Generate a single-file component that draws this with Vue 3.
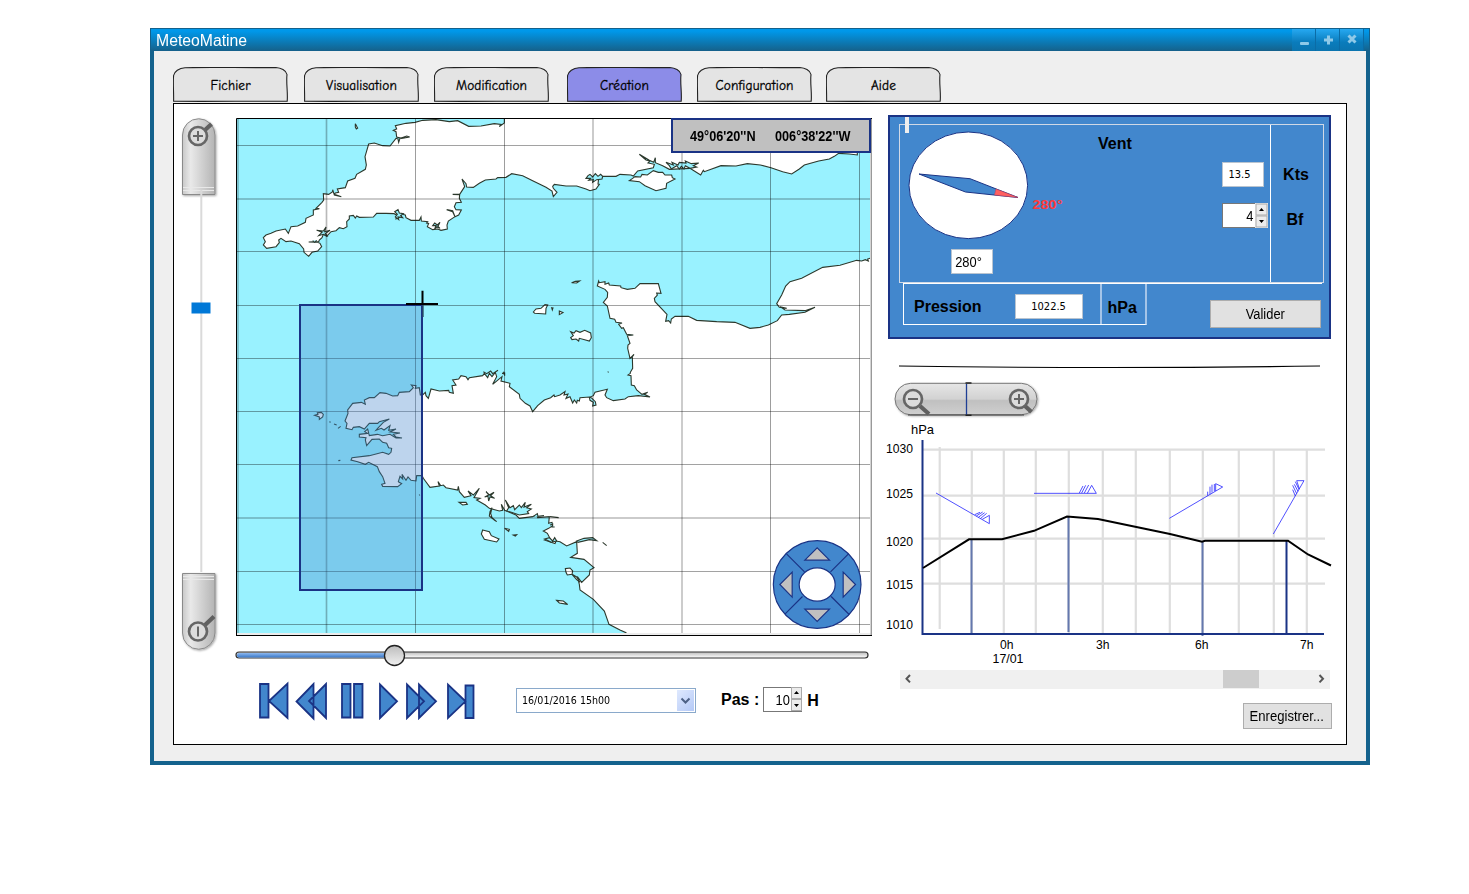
<script setup>
const tabs = ['Fichier', 'Visualisation', 'Modification', 'Création', 'Configuration', 'Aide']

// Map drawing units: three per screen pixel
const meridians = [
  { x: 6, w: 6, o: 0.2 }, { x: 271.5, w: 5, o: 0.27 }, { x: 538.5, w: 3, o: 0.38 }, { x: 805.5, w: 3, o: 0.38 },
  { x: 1071, w: 6, o: 0.2 }, { x: 1338, w: 5, o: 0.24 }, { x: 1603.5, w: 3, o: 0.38 }, { x: 1870.5, w: 3, o: 0.38 },
]
const parallels = [
  { y: 91.5, w: 3, o: 0.36 }, { y: 252, w: 6, o: 0.2 }, { y: 409.5, w: 3, o: 0.36 }, { y: 571.5, w: 3, o: 0.36 },
  { y: 730.5, w: 3, o: 0.36 }, { y: 889.5, w: 3, o: 0.36 }, { y: 1048.5, w: 3, o: 0.36 }, { y: 1209, w: 6, o: 0.2 },
  { y: 1369.5, w: 3, o: 0.36 }, { y: 1528.5, w: 3, o: 0.36 },
]

const england =
  'M805 9L1864 9 1864 120 1840 117 1808 115 1795 124 1780 132 1748 138 1705 150 1690 162 1667 177 1640 170 1605 158 1573 150 1534 146 1500 153 1455 152 1405 170 1402 166 1394 180 1375 168 1362 160 1300 163 1280 152 1258 143 1258 128 1253 142 1240 136 1210 118 1230 135 1242 138 1236 144 1255 148 1252 158 1205 168 1192 183 1185 180 1152 178 1140 184 1100 184 1088 190 1086 207 1090 208 1080 222 1062 227 1050 222 1022 213 990 213 955 208 950 214 952 220 963 232 952 245 948 228 930 217 890 197 860 182 827 176 810 187 785 188 780 192 748 195 730 205 712 217 692 216 690 206 678 192 686 215 671 238 650 238 671 239 670 250 676 262 660 263 655 275 660 284 676 285 668 300 657 305 650 287 632 284 650 290 657 305 637 318 633 330 634 342 615 346 605 342 590 344 574 335 578 325 572 324 575 320 556 318 555 306 550 316 525 316 510 308 508 300 498 298 490 308 480 312 482 300 474 296 450 295 422 295 412 306 370 307 362 303 358 309 352 301 340 303 340 312 332 320 333 335 322 341 310 338 300 347 285 350 272 364 262 358 258 368 250 375 248 380 218 381 245 382 252 385 257 395 245 408 228 412 218 424 204 412 203 402 190 386 165 378 150 380 135 370 128 375 130 383 120 395 92 400 82 390 88 380 82 368 90 360 105 355 120 348 148 342 157 355 165 335 185 333 208 322 210 310 232 300 232 285 250 281 240 280 258 262 263 255 262 236 278 238 290 230 290 224 295 240 316 245 295 238 298 234 308 232 304 222 328 218 335 198 357 190 362 178 388 163 391 150 387 125 398 87 415 84 440 92 462 93 480 70 486 72 488 82 492 70 512 63 521 66 497 70 482 66 480 50 472 46 482 42 478 32 510 25 537 22 560 16 600 14 640 20 665 17 698 34 735 33 775 26 795 28 790 35 805 24Z'

const france =
  'M1912 428L1902 430 1895 432 1897 438 1888 434 1877 438 1862 436 1812 451 1760 457 1697 490 1662 500 1649 513 1637 540 1622 566 1630 577 1652 580 1632 575 1647 585 1707 587 1737 577 1707 592 1660 598 1637 600 1624 617 1597 630 1572 637 1542 640 1497 622 1442 620 1382 616 1357 604 1317 604 1306 612 1304 624 1298 617 1289 619 1293 598 1257 560 1255 550 1264 540 1262 534 1275 535 1267 506 1212 506 1197 520 1174 523 1155 518 1154 513 1120 510 1118 504 1107 508 1107 500 1090 503 1088 498 1084 513 1107 523 1115 532 1114 547 1102 562 1114 573 1122 610 1136 613 1140 622 1158 624 1148 628 1157 640 1162 638 1172 658 1192 660 1174 662 1182 685 1176 690 1175 700 1182 730 1194 718 1189 725 1190 760 1183 772 1183 775 1176 780 1185 782 1186 810 1195 812 1202 825 1218 838 1235 832 1225 838 1242 846 1207 842 1177 845 1167 852 1132 857 1112 848 1107 840 1114 823 1092 828 1077 832 1072 842 1062 846 1068 850 1078 860 1080 870 1070 873 1072 862 1062 856 1060 846 1032 848 1030 858 1024 856 1022 864 1015 855 1010 864 1002 845 990 850 996 837 984 840 987 830 972 840 956 845 954 840 944 848 925 855 905 872 890 890 882 873 868 865 852 850 850 838 820 815 822 805 795 798 798 785 770 808 782 785 778 772 768 785 760 775 755 788 745 775 740 782 700 788 696 794 690 785 675 782 668 792 650 795 660 810 648 812 652 835 640 832 638 826 610 828 585 822 577 850 570 842 568 832 560 840 553 840 550 818 538 820 540 812 526 810 532 818 520 830 490 832 485 842 470 843 450 835 432 833 415 848 400 848 385 855 388 868 376 862 350 865 335 885 336 895 327 918 333 925 330 940 348 944 352 937 370 935 385 942 400 925 425 925 430 920 460 912 442 922 425 940 420 946 436 940 444 945 462 932 458 946 480 942 462 951 492 954 472 958 480 966 498 969 480 969 462 958 440 962 424 958 400 962 395 942 386 950 395 955 370 958 370 966 390 968 388 975 392 992 408 973 430 972 440 982 452 985 458 998 467 1000 465 1012 458 1018 440 1012 400 1022 348 1028 345 1035 365 1040 388 1048 398 1042 424 1055 430 1070 440 1085 447 1105 437 1108 440 1114 485 1115 497 1106 487 1100 492 1084 500 1092 498 1078 510 1096 516 1086 525 1096 540 1098 542 1082 558 1082 562 1090 568 1098 582 1117 610 1113 606 1100 614 1112 622 1110 630 1118 665 1125 667 1114 670 1130 685 1147 705 1142 696 1128 712 1140 730 1120 714 1148 732 1150 722 1155 748 1170 760 1180 790 1188 800 1186 796 1168 806 1186 840 1200 850 1210 890 1205 902 1200 905 1208 940 1205 938 1225 948 1222 950 1232 938 1240 922 1248 934 1255 942 1270 926 1275 957 1286 960 1278 972 1280 992 1293 1022 1280 1024 1315 1004 1327 1044 1333 1074 1358 1062 1365 1060 1380 1037 1402 1024 1385 1030 1408 1032 1425 1072 1453 1105 1488 1119 1528 1152 1545 1170 1553 1170 1570 1912 1570Z'

const islands = [
  'M358 26L362 34 365 39 361 42 358 36Z',
  'M1180 197L1190 190 1197 185 1214 186 1218 178 1234 180 1252 167 1267 172 1280 172 1287 180 1307 180 1309 188 1317 192 1292 205 1290 220 1260 227 1227 212 1210 200Z',
  'M892 591L900 582 915 580 927 569 935 570 930 580 929 597 896 595Z',
  'M947 578L951 579 949 585Z',
  'M1007 503L1018 499 1031 498 1022 504Z',
  'M970 588L981 593 970 599Z',
  'M1004 650L1014 654 1020 647 1032 652 1046 646 1064 654 1066 668 1060 678 1046 674 1030 670 1028 678 1020 672 1008 674 1004 668 1012 662Z',
  'M236 901L246 898 244 893 256 892 262 898 260 906 250 913 250 906Z',
  'M669 1162L690 1162 694 1168 680 1170Z',
  'M768 1178L764 1195 768 1208 782 1220 776 1216 760 1203 762 1190Z',
  'M740 1245L760 1250 766 1262 789 1272 782 1281 745 1273 736 1257Z',
  'M806 1240L820 1243 818 1249Z',
  'M832 1260L842 1259 838 1263Z',
  'M988 1361L1002 1359 1010 1368 1008 1378 994 1380 990 1372Z',
  'M1008 1378L1022 1386 1032 1402 1022 1394Z',
  'M962 1456L982 1458 995 1468 970 1464Z',
]

const inlets = [
  'M1100 184L1094 178 1086 184 1078 176 1070 186 1062 178 1056 182 1050 190 1064 190 1058 196 1072 194 1070 202 1082 194 1098 192Z',
  'M1290 142L1312 150 1308 142 1326 150 1330 142 1350 144 1348 138 1366 146 1388 144 1372 152 1382 156 1362 160 1348 152 1344 162 1336 154 1330 162 1322 152 1306 162 1300 152Z',
  'M476 290L486 284 490 294 502 296 494 302 500 308 486 306 488 314 478 306 484 298Z',
  'M596 324L604 330 612 322 606 334 612 340 602 336 596 342 600 332 590 332Z',
  'M242 346L262 348 270 336 266 350 282 346 268 356 276 364 262 358 248 362 258 352Z',
  'M230 377L236 382 242 376',
  'M750 1130L760 1140 774 1132 764 1142 776 1150 762 1146 758 1158 756 1144 746 1146 758 1140Z',
  'M808 1155L822 1178 832 1172 836 1184 850 1170 856 1178 868 1162 864 1176 886 1168 872 1178 886 1182 874 1190 878 1196 850 1200 826 1192 812 1188 818 1178Z',
  'M892 1204L904 1196 906 1204 924 1202',
  'M1022 1278L1044 1270 1070 1268 1082 1277 1060 1274 1026 1282Z',
  'M926 1272L940 1268 950 1278 956 1268 962 1278 946 1282Z',
  'M942 1205L968 1208M942 1230L950 1228 948 1236 956 1236',
  'M742 770L752 776 764 768 770 776 786 766M798 775L806 774 806 782M802 778L804 770',
  'M1100 1282L1112 1292M280 920L284 922M294 927L302 930M306 940L314 934M307 1037L313 1036M549 1139L552 1141M1115 770L1118 772',
]

const gridX = [940, 972, 1004, 1036, 1069, 1103, 1136, 1170, 1203, 1239, 1274, 1307]
const gridY = [450, 496, 539, 584]
const yLabels = [{ t: '1030', y: 452.6 }, { t: '1025', y: 498 }, { t: '1020', y: 546 }, { t: '1015', y: 588.7 }, { t: '1010', y: 628.7 }]
const xLabels = [
  { t: '0h', x: 1000, w: 13.5, y: 649 }, { t: '17/01', x: 992.5, w: 31, y: 662.7 },
  { t: '3h', x: 1096, w: 13.5, y: 649 }, { t: '6h', x: 1195, w: 13.5, y: 649 }, { t: '7h', x: 1300, w: 13.5, y: 649 },
]
</script>

<template>
  <div class="window">
    <header class="titlebar">
      <span class="title">MeteoMatine</span>
      <div class="winbtns">
        <button><svg width="24" height="22"><rect x="8" y="13" width="9" height="3" rx="1" /></svg></button>
        <button><svg width="24" height="22"><path d="M11 6.500h3v3h3v3h-3v3h-3v-3H8v-3h3z" /></svg></button>
        <button><svg width="24" height="22"><path class="cross" d="M8.500 6.500l7 7M15.500 6.500l-7 7" /></svg></button>
      </div>
    </header>

    <nav class="tabs">
      <div v-for="t in tabs" :key="t" class="tab" :class="{ active: t === 'Création' }">
        <svg class="shape" width="116" height="36" viewBox="0 0 116 36">
          <path d="M.6 34.300C.8 24-.1 16 .6 8.500 1.300 4.500 6 1 12 .7 40 0 75 1 102 .5 108 .7 113.300 3.500 114 7.500 113 16 115 25 114.200 34.300 80 34 40 34.700 .6 34.300Z" />
        </svg>
        <span>{{ t }}</span>
      </div>
    </nav>

    <main class="panel">
      <svg class="vzoom" width="40" height="536" viewBox="180 117 40 536">
        <defs>
          <linearGradient id="metal"><stop offset="0" stop-color="#c8c8c8" /><stop offset=".25" stop-color="#e9e9e9" /><stop offset="1" stop-color="#b4b4b4" /></linearGradient>
          <filter id="shade" x="-20%" y="-10%" width="150%" height="130%"><feDropShadow dx="1" dy="1" stdDeviation="1" flood-opacity=".35" /></filter>
        </defs>
        <path class="knob" filter="url(#shade)" d="M182.500 194.500V135a16 16 0 0 1 32.500 0v59.500z" />
        <path class="knob" filter="url(#shade)" d="M182.500 573.500V633a16 16 0 0 0 32.500 0v-59.500z" />
        <path class="edge" d="M183 187.500h31M183 190.500h31M183 576.500h31M183 579.500h31" />
        <path class="rail" d="M201.300 190v382" />
        <rect x="191.500" y="302.500" width="19" height="11" fill="#0078d7" />
        <g class="lens">
          <path class="handle" d="M205 130l6.500-6M205 625l9-8.500" />
          <circle cx="198" cy="136" r="9" /><circle cx="198" cy="631.500" r="9" />
          <path class="sign" d="M193 136h10M198 131v10M198 626.500v10" />
        </g>
      </svg>

      <section class="mapcol">
        <div class="mapbox">
          <svg class="map" width="636" height="518" viewBox="0 9 1908 1554">
            <rect x="0" y="9" width="1908" height="1554" fill="#fff" />
            <rect x="3" y="12" width="1899" height="1542" fill="#99f2ff" />
            <g class="coast">
              <path :d="england" /><path :d="france" />
              <path v-for="(d, i) in islands" :key="i" :d="d" />
              <path v-for="(d, i) in inlets" :key="'s' + i" class="inlet" :d="d" />
            </g>
            <path v-for="m in meridians" :key="m.x" :d="`M${m.x} 12V1554`" stroke="#000" :stroke-width="m.w" :opacity="m.o" />
            <path v-for="p in parallels" :key="p.y" :d="`M3 ${p.y}H1902`" stroke="#000" :stroke-width="p.w" :opacity="p.o" />
            <rect x="1902" y="12" width="6" height="1548" fill="#fff" />
            <rect class="area" x="192" y="570" width="366" height="855" />
            <path d="M559.500 527V570M510 567H606" stroke="#000" stroke-width="6" />
            <path d="M561 570V606" stroke="#2a4a60" stroke-width="4" />
            <path d="M3 1557H1905" stroke="#ececec" stroke-width="6" />
            <path d="M1906 9V1563" stroke="#999" stroke-width="4.500" />
            <path d="M1.500 1563V10.500H1908M0 1561.500H1908" stroke="#000" stroke-width="3" fill="none" />
            <g transform="translate(1743.500 1408.500)" class="pad">
              <circle r="131.500" class="ring" />
              <path d="M-92 -92L-38 -38M94 -92L40 -38M-96 88L-44 36M96 90L42 36" />
              <ellipse rx="54" ry="50" fill="#fff" />
              <path class="arrow" d="M-37 -73H37L0 -110ZM-37 74H37L0 111ZM-75 -37V38L-112 0ZM78 -37V38L115 0Z" />
            </g>
          </svg>
          <div class="coords"><span>49°06'20''N</span><span>006°38'22''W</span></div>
        </div>

        <svg class="timeline" width="640" height="26" viewBox="232 643 640 26">
          <defs>
            <linearGradient id="track" x2="0" y2="1"><stop offset="0" stop-color="#bbb" /><stop offset="1" stop-color="#fff" /></linearGradient>
            <linearGradient id="done" x2="0" y2="1"><stop offset="0" stop-color="#8db8ee" /><stop offset="1" stop-color="#3a78c8" /></linearGradient>
            <linearGradient id="thumb" x2="0" y2="1"><stop offset="0" stop-color="#bdbdbd" /><stop offset="1" stop-color="#f0f0f0" /></linearGradient>
          </defs>
          <rect x="236" y="652" width="632" height="6" rx="3" fill="url(#track)" stroke="#333" stroke-width="1.200" />
          <rect x="237" y="653" width="150" height="4.500" rx="2" fill="url(#done)" />
          <circle cx="394.500" cy="655.500" r="10" fill="url(#thumb)" stroke="#222" stroke-width="1.300" />
        </svg>

        <div class="controls">
          <svg class="media" width="222" height="42" viewBox="256 680 222 42">
            <path d="M260 684h8.500v33.500H260zM287.500 683.500v34.500L269 701zM326 684v34l-17-17zM313.500 684v34.500L296.500 701.500zM342 684h8.500v33.500H342zM354 684h8.500v33.500H354zM380 684.500v33.500l17-16.700zM407 684.500v33.500l17-16.700zM419 684.500v33.500l17-16.700zM448 684.500v33.500l17.500-16.700zM465.500 685.500h8V718h-8z" />
          </svg>
          <div class="combo">
            <span class="tahoma">16/01/2016 15h00</span>
            <i><svg width="17" height="21"><path d="M4.500 8.500l4 4 4-4" /></svg></i>
          </div>
          <b class="pas">Pas :</b>
          <div class="spin step">
            <span class="narrow">10</span>
            <svg width="11" height="24"><rect x=".5" y=".5" width="10" height="11" /><rect x=".5" y="12.500" width="10" height="11" /><path d="M3 7h5L5.500 4zM3 17h5l-2.500 3z" /></svg>
          </div>
          <b class="unit">H</b>
        </div>
      </section>

      <section class="side">
        <div class="weather">
          <i class="mark"></i>
          <div class="wind">
            <div class="dial">
              <svg width="164" height="112" viewBox="905 130 164 112">
                <ellipse cx="968.300" cy="185.300" rx="59.300" ry="53.300" fill="#fff" stroke="#1a3385" />
                <path d="M919 174L970 178.700 1018 197.500 965.500 192Z" fill="#4287cd" stroke="#1a3385" />
                <path d="M996 189L1018 197.500 994.500 195Z" fill="#ff6060" stroke="#c04060" stroke-width=".5" />
                <text x="1032.500" y="209" textLength="30" lengthAdjust="spacingAndGlyphs">280°</text>
              </svg>
              <div class="field deg"><span class="narrow">280°</span></div>
            </div>
            <h2>Vent</h2>
            <div class="speed">
              <div class="field"><span class="tahoma">13.5</span></div>
              <div class="spin">
                <span class="narrow">4</span>
                <svg width="13" height="25"><rect x="1" y="1" width="11" height="11" /><rect x="1" y="13" width="11" height="11" /><path d="M4 8h5L6.500 5zM4 17h5l-2.500 3z" /></svg>
              </div>
            </div>
            <div class="units"><b>Kts</b><b>Bf</b></div>
          </div>
          <div class="lower">
            <div class="press">
              <b>Pression</b>
              <div class="field"><span class="tahoma">1022.5</span></div>
              <b class="hpa">hPa</b>
            </div>
            <button class="btn valider"><span class="narrow">Valider</span></button>
          </div>
        </div>

        <svg class="graph" width="462" height="310" viewBox="884 358 462 310">
          <defs>
            <linearGradient id="pill" x2="0" y2="1"><stop offset="0" stop-color="#e6e6e6" /><stop offset=".5" stop-color="#d2d2d2" /><stop offset=".55" stop-color="#c0c0c0" /><stop offset="1" stop-color="#cfcfcf" /></linearGradient>
          </defs>
          <path d="M899 366Q1110 369 1320 366" fill="none" stroke="#000" stroke-width="1.100" />
          <rect x="895" y="383.300" width="142" height="31.500" rx="15.700" fill="url(#pill)" stroke="#777" filter="url(#shade)" />
          <path d="M908 415H1024" stroke="#444" />
          <path d="M966.500 384V415" stroke="#1f3f95" stroke-width="1.300" />
          <path d="M965.500 383h6M965.500 415.300h6" stroke="#222" stroke-width="1.500" />
          <g class="lens">
            <path class="handle" d="M920 406l9 8M1025 406l6.500 6" />
            <circle cx="913" cy="399" r="9" /><circle cx="1019" cy="399" r="9" />
            <path class="sign" d="M908 399h10M1014 399h10M1019 394v10" />
          </g>
          <g stroke="#dedede" stroke-width="2.200">
            <path v-for="y in gridY" :key="y" :d="`M923 ${y - .4}H1325`" />
            <path v-for="x in gridX" :key="x" :d="x === 940 ? 'M939.700 447V629' : `M${x - .2} 450V633`" />
          </g>
          <g class="marks"><path d="M971.500 540V633M1068.500 517V632M1202.500 542V636" /><path class="firm" d="M1286.500 541V633M922.500 440V635M922 634H1324" /></g>
          <path class="curve" d="M923 568L969 539.300H1002L1034 530.800 1067 516.500 1098 519 1170 534 1202 541.700 1205 540.700H1288L1308 554.500 1331 565.500" />
          <g class="barbs" transform="translate(880 350) scale(.33333)">
            <path d="M168 429L328 521V496L307 508M284 494L300 487M289 498L308 486M295 502L314 488M301 506L320 490" />
            <path d="M462 430H649L635 406 622 430M598 429L609 408M605 429L617 406M613 429L626 405" />
            <path d="M868 505L1028 411 1007 401V423M983 437V425M990 433V410M996 428V404M1003 424V402" />
            <path d="M1180 552L1272 392H1250L1258 416M1238 419L1246 438M1238 406L1250 431M1243 403L1254 424M1246 395L1257 418" />
          </g>
          <text x="911" y="434" textLength="23" lengthAdjust="spacingAndGlyphs">hPa</text>
          <text v-for="l in yLabels" :key="l.t" x="886" :y="l.y" textLength="27" lengthAdjust="spacingAndGlyphs">{{ l.t }}</text>
          <text v-for="l in xLabels" :key="l.t" :x="l.x" :y="l.y" :textLength="l.w" lengthAdjust="spacingAndGlyphs">{{ l.t }}</text>
        </svg>

        <div class="scroll">
          <svg width="16" height="18"><path d="M10 5l-3.500 3.700 3.500 3.700" /></svg>
          <i></i>
          <svg width="16" height="18"><path d="M5.500 5L9 8.700l-3.500 3.700" /></svg>
        </div>
        <button class="btn save"><span class="narrow">Enregistrer...</span></button>
      </section>
    </main>
  </div>
</template>

<style>
body { margin: 0; background: #fff; }
</style>

<style scoped>
* { box-sizing: border-box; }
svg { display: block; flex: none; }
button { padding: 0; font: inherit; }
b { font-size: 16px; line-height: 18px; }
.window {
  width: 1220px; height: 737px; margin: 28px 0 0 150px; background: #efefef;
  border: 4px solid #14628d; border-top: 0; font-family: "Liberation Sans", Arial, sans-serif; color: #000;
}
.titlebar {
  display: flex; justify-content: space-between; height: 23px; margin: 0 -4px; padding: 0 6px;
  border: 1px solid #14618c; background: linear-gradient(#0098ea 10%, #14648f);
}
.title { color: #fff; font-size: 16px; line-height: 23px; transform: scaleX(.985); transform-origin: left; margin-left: -1px; }
.winbtns { display: flex; margin-right: -1px; }
.winbtns button { width: 24px; height: 22px; border: 0; border-right: 1px solid #0b6ca6; background: linear-gradient(#26a9f2, #0a7cbc 60%, #0b74af); }
.winbtns svg { fill: #8fc9e8; }
.winbtns .cross { stroke: #8fc9e8; stroke-width: 3; }

.tabs { display: grid; grid-template-columns: 131px 130px 133px 130px 129px 116px; height: 52px; padding: 16px 0 0 19px; }
.tab { position: relative; width: 115px; height: 35px; text-align: center; font: 500 13.300px/37px "Comic Sans MS", "Comic Neue", Lato, cursive; -webkit-text-stroke: .3px #000; letter-spacing: .15px; }
.tab .shape { position: absolute; left: 0; top: 0; }
.tab .shape path { fill: #e4e4e4; stroke: #222; stroke-width: 1.100; }
.tab.active .shape path { fill: #8c8ce8; }
.tab span { position: relative; }

.panel { display: flex; width: 1174px; height: 642px; margin-left: 19px; border: 1px solid #000; background: #fff; }
.vzoom { margin: 13px 16px 0 6px; }
.knob { fill: url(#metal); stroke: #8a8a8a; }
.edge { stroke: #e8e8e8; }
.rail { stroke: #dadada; stroke-width: 2; }
.lens { fill: none; stroke: #666; stroke-width: 2; }
.lens .handle { stroke-width: 4.200; stroke: #606060; }
.lens circle { fill: #dcdcdc; stroke-width: 2.700; }
.lens .sign { stroke-width: 2; }

.mapcol { width: 636px; padding-top: 14px; }
.mapbox { position: relative; }
.coast path { fill: #fff; stroke: #2c382c; stroke-width: 3.300; }
.coast .inlet { fill: #99f2ff; }
.area { fill: rgba(67, 134, 205, .353); stroke: #1a3385; stroke-width: 6; }
.pad { stroke: #1a3385; stroke-width: 3.500; }
.pad .ring { fill: #4287cd; }
.pad .arrow { fill: #c0c0c0; }
.coords {
  position: absolute; top: 0; right: 1px; display: flex; gap: 20px; width: 200px; height: 35px; padding-left: 17px;
  border: 2px solid #1a3385; background: #c0c0c0; font-weight: bold; font-size: 14px; line-height: 33px;
}
.coords span { transform: scaleX(.905); transform-origin: left; width: 65px; white-space: nowrap; }
.timeline { margin: 7px 0 0 -4px; }
.controls { display: flex; align-items: center; height: 42px; margin-top: 11px; padding-left: 20px; }
.media { fill: #4287cd; stroke: #1a3385; stroke-width: 1.800; }
.tahoma { font: 11px/22px "DejaVu Sans Condensed", "Noto Sans", sans-serif; }
.combo { display: flex; justify-content: space-between; width: 180px; height: 25px; margin: -1px 0 0 38px; padding: 1px 1px 1px 5px; border: 1px solid #8aa9cb; background: #fff; }
.combo .tahoma { transform: scaleX(.962); transform-origin: left; white-space: nowrap; }
.combo i { width: 17px; height: 21px; background: linear-gradient(135deg, #dfe9fe, #b4c9f7); }
.combo path { fill: none; stroke: #4d6185; stroke-width: 2; }
.pas { margin: -2px 4px 0 25px; white-space: nowrap; }
.unit { margin-top: -1px; }
.narrow { display: inline-block; font-size: 14px; transform: scaleX(.92); }
.spin { display: flex; justify-content: flex-end; width: 46px; height: 25px; background: #fff; border: 1px solid #777; border-right: 0; line-height: 25px; }
.spin .narrow { margin-right: 1px; }
.spin svg { margin: -1px 0; background: #f4f4f4; }
.spin rect { fill: #ececec; stroke: #aaa; }
.spin path { fill: #000; }
.spin.step { width: 39px; margin: -3px 5px 0 0; }

.side { width: 462px; padding-top: 11px; margin-left: 12px; }
.weather { position: relative; width: 443px; height: 224px; margin-left: 4px; border: 2px solid #1a3385; background: #4287cd; }
.mark { position: absolute; left: 15px; top: 0; width: 4px; height: 16px; background: #eee; }
.wind { display: flex; height: 159px; margin: 7px 5px 0 9px; border: 1px solid #d0d9e6; }
.dial { width: 164px; padding: 5px 0 0 5px; }
.dial text { font-weight: bold; font-size: 13.500px; fill: #ff3a3a; }
.field { display: flex; align-items: center; justify-content: center; width: 42px; height: 25px; background: #fff; border: 1px solid #b9c4d0; }
.deg { justify-content: flex-start; margin: 7px 0 0 45.500px; padding-left: 2px; }
h2 { margin: 10px 0 0 34px; font-size: 16px; line-height: 18px; width: 124px; }
.speed { display: flex; flex-direction: column; gap: 16px; width: 48px; padding-top: 37px; }
.speed .field { padding-right: 7px; }
.speed .spin { height: 25px; }
.units { flex: 1; display: flex; flex-direction: column; align-items: center; gap: 27px; padding: 41px 2px 0 0; border-left: 1px solid #fff; }
.units b:last-child { margin-left: -2px; }
.lower { display: flex; align-items: flex-start; margin: 0 7px 0 13px; border-top: 1px solid #fff; }
.press { display: flex; align-items: center; width: 244px; height: 41px; padding-left: 10px; border: solid #fff; border-width: 0 2px 1px 1px; border-right-color: #a4c4e8; padding-top: 6px; }
.press .field { width: 68px; margin: -1px 0 0 33px; }
.press .hpa { align-self: stretch; margin: -6px 0 0 17px; padding: 15px 0 0 6px; border-left: 2px solid #a4c4e8; }
.btn { display: flex; align-items: center; justify-content: center; border: 1px solid #adadad; background: #e1e1e1; font-size: 14px; color: #000; white-space: nowrap; }
.valider { width: 111px; height: 28px; margin: 16px 0 0 63px; flex: none; }
.graph { margin-top: 19px; }
.graph text { font-size: 13px; }
.marks { stroke: #6478ae; stroke-width: 2; }
.marks .firm { stroke: #1a3385; }
.curve { fill: none; stroke: #000; stroke-width: 2; }
.barbs { fill: none; stroke: #2424ff; stroke-width: 2.400; }
.scroll { display: flex; width: 430px; height: 19px; margin: 2px 0 0 16px; background: #f0f0f0; }
.scroll i { width: 36px; height: 18px; margin: 0 55px 0 306.500px; background: #cdcdcd; }
.scroll path { fill: none; stroke: #555; stroke-width: 2; }
.save { width: 89px; height: 26px; margin: 14px 0 0 359px; }
.save .narrow { margin-left: -1px; transform: scaleX(.935); }
</style>
